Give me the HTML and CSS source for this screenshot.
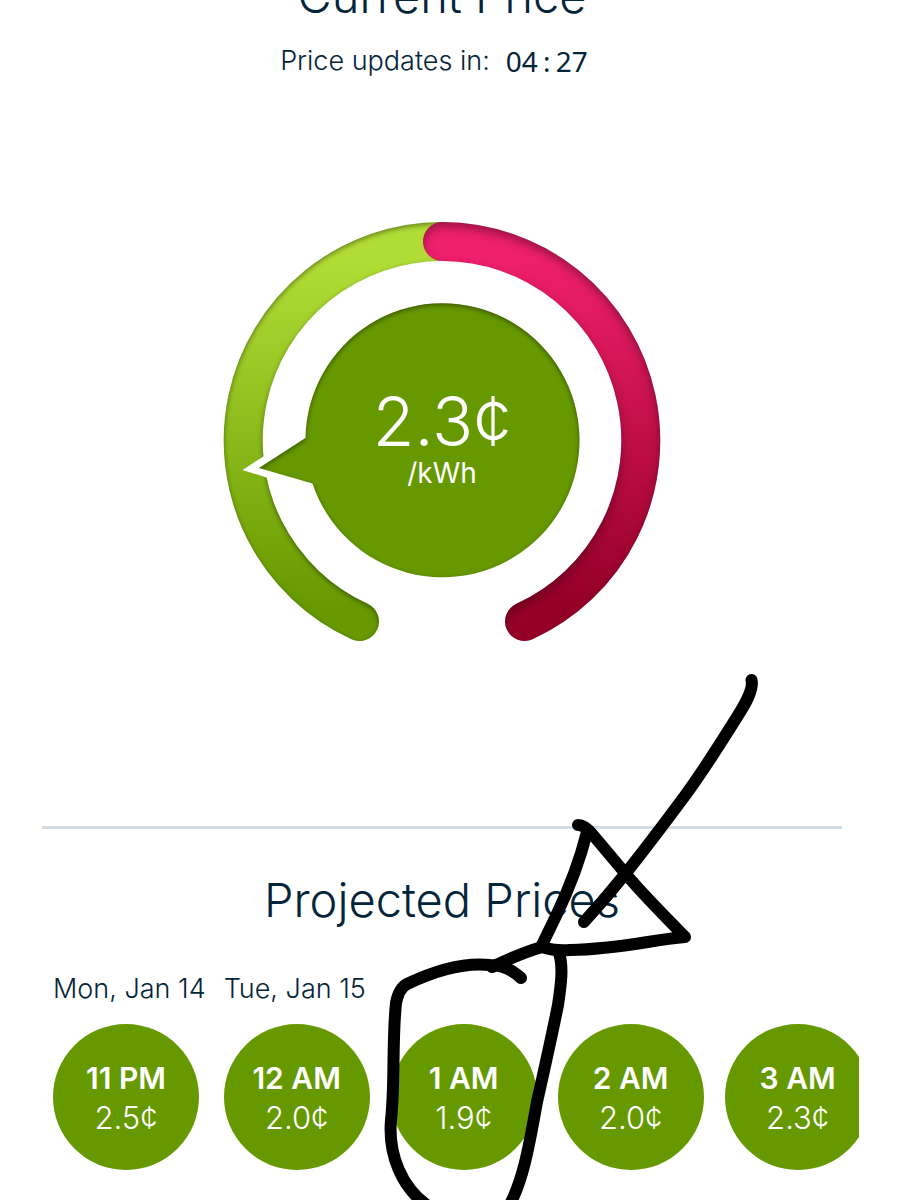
FILE: index.html
```html
<!DOCTYPE html>
<html lang="en">
<head>
<meta charset="utf-8">
<meta name="viewport" content="width=device-width, initial-scale=1">
<title>Current Price</title>
<link rel="stylesheet" href="styles.css">
</head>
<body>
<main class="page">
  <section class="current">
    <h1 class="title">Current Price</h1>
    <p class="updates">Price updates in: <time class="timer">04<span class="colon">:</span>27</time></p>
    <div class="gauge">
      <svg class="gauge-art" viewBox="0 0 440 440" aria-hidden="true">
        <defs>
          <linearGradient id="low" gradientUnits="userSpaceOnUse" x1="0" y1="0" x2="0" y2="420">
            <stop offset="0.1" stop-color="#b0dc35"/>
            <stop offset="0.92" stop-color="#669900"/>
          </linearGradient>
          <linearGradient id="high" gradientUnits="userSpaceOnUse" x1="0" y1="0" x2="0" y2="420">
            <stop offset="0.1" stop-color="#ee1f6b"/>
            <stop offset="0.9" stop-color="#960028"/>
          </linearGradient>
          <filter id="inset" filterUnits="userSpaceOnUse" x="-20" y="-20" width="480" height="480" color-interpolation-filters="sRGB">
            <feOffset in="SourceAlpha" dy="2" result="o"/>
            <feGaussianBlur in="o" stdDeviation="2.500" result="b"/>
            <feComposite in="SourceAlpha" in2="b" operator="out" result="edge"/>
            <feFlood flood-color="#000" flood-opacity="0.42"/>
            <feComposite in2="edge" operator="in" result="shade"/>
            <feMerge><feMergeNode in="SourceGraphic"/><feMergeNode in="shade"/></feMerge>
          </filter>
          <filter id="inset-deep" filterUnits="userSpaceOnUse" x="-20" y="-20" width="480" height="480" color-interpolation-filters="sRGB">
            <feOffset in="SourceAlpha" dy="5" result="o"/>
            <feGaussianBlur in="o" stdDeviation="5" result="b"/>
            <feComposite in="SourceAlpha" in2="b" operator="out" result="edge"/>
            <feFlood flood-color="#200010" flood-opacity="0.4"/>
            <feComposite in2="edge" operator="in" result="shade"/>
            <feMerge><feMergeNode in="SourceGraphic"/><feMergeNode in="shade"/></feMerge>
          </filter>
        </defs>
        <path d="M137.500 400.500A199 199 0 0 1 220 20.500" fill="none" stroke="url(#low)" stroke-width="39" stroke-linecap="round" filter="url(#inset)"/>
        <path d="M220.500 20.500A199 199 0 0 1 302.500 400.500" fill="none" stroke="url(#high)" stroke-width="39" stroke-linecap="round" filter="url(#inset-deep)"/>
        <path d="M20.500 249L84 208V269Z" fill="#fff"/>
        <path d="M37 247L83.500 217A137 137 0 1 1 90.500 262.500Z" fill="#669900" filter="url(#inset)"/>
      </svg>
      <div class="reading">
        <span class="amount">2.3¢</span>
        <span class="unit">/kWh</span>
      </div>
    </div>
  </section>
  <hr class="rule">
  <section class="projected">
    <h2 class="title">Projected Prices</h2>
    <div class="rail">
      <section class="day">
        <h3 class="date">Mon, Jan 14</h3>
        <ul class="hours">
          <li class="hour"><b class="hour-name">11 PM</b><span class="hour-price">2.5¢</span></li>
        </ul>
      </section>
      <section class="day">
        <h3 class="date">Tue, Jan 15</h3>
        <ul class="hours">
          <li class="hour"><b class="hour-name">12 AM</b><span class="hour-price">2.0¢</span></li>
          <li class="hour"><b class="hour-name">1 AM</b><span class="hour-price">1.9¢</span></li>
          <li class="hour"><b class="hour-name">2 AM</b><span class="hour-price">2.0¢</span></li>
          <li class="hour"><b class="hour-name">3 AM</b><span class="hour-price">2.3¢</span></li>
        </ul>
      </section>
    </div>
  </section>
  <svg class="scribble" width="400" height="560" viewBox="370 660 400 560" aria-hidden="true">
    <g fill="none" stroke="#000" stroke-width="12" stroke-linecap="round" stroke-linejoin="round">
      <path d="M751.500 680C754 690 744 706 737 717C720 744 704 770 684 797C664 824 645 849 626 873Q605 899 584 922"/>
      <path d="M578 825Q585 825 593 835L625 873C645 897 665 916 685 937C650 940 620 949 570 950Q554 951 542 947Q521 953 492 967"/>
      <path d="M587 832C580 860 567 893 556 916L541 947"/>
      <path d="M521 978Q507 965 490 965C462 962 432 972 407 984Q399 988 396 1003C392 1040 395 1085 391 1120C388 1155 402 1188 428 1206"/>
      <path d="M558 950C564 965 561 985 558 1005C551 1040 543 1075 537 1102C530 1140 524 1180 508 1208"/>
    </g>
  </svg>
</main>
</body>
</html>
```
FILE: styles.css
```css
* { box-sizing: border-box; }

body {
  margin: 0;
  background: #fff;
  color: #04243a;
  font-family: Inter, "Liberation Sans", sans-serif;
  font-weight: 300;
}

.page {
  position: relative;
  min-height: 100vh;
  max-height: 100vh;
  overflow: hidden;
  padding: 0 60px 0 42px;
}

.title {
  margin: 0;
  font-size: 47px;
  line-height: 56px;
  font-weight: 300;
  text-align: center;
}

.current .title { margin-top: -32px; }

.updates {
  display: flex;
  justify-content: center;
  gap: 16px;
  margin: 21px 16px 0 0;
  font-size: 27px;
  line-height: 32px;
}

.timer {
  font-family: "Noto Sans", sans-serif;
  font-size: 28px;
  font-weight: 400;
  line-height: 32px;
}

.colon {
  display: inline-block;
  width: 18px;
  text-align: center;
}

.gauge {
  display: grid;
  justify-items: center;
  margin-top: 144px;
}

.gauge-art,
.reading { grid-area: 1 / 1; }

.gauge-art {
  width: 440px;
  max-width: 100%;
  overflow: visible;
}

.reading {
  display: flex;
  flex-direction: column;
  align-items: center;
  align-self: center;
  padding-bottom: 8px;
  color: #fff;
}

.amount {
  font-size: 68px;
  line-height: 72px;
}

.unit {
  font-size: 28px;
  line-height: 32px;
  font-weight: 400;
}

.rule {
  height: 3px;
  margin: 165px 0 0;
  border: 0;
  background: #d3dce5;
}

.projected .title { margin-top: 43px; }

.rail {
  display: flex;
  gap: 18px;
  margin: 45px -17px 0 0;
  padding-left: 11px;
  overflow: hidden;
}

.day { flex: none; }

.date {
  margin: 0;
  font-size: 27px;
  line-height: 32px;
  font-weight: 300;
}

.hours {
  display: flex;
  gap: 21px;
  margin: 19px 0 0;
  padding: 0;
  list-style: none;
}

.hour {
  display: flex;
  flex: none;
  flex-direction: column;
  align-items: center;
  justify-content: center;
  width: 146px;
  height: 146px;
  padding-top: 2px;
  border-radius: 50%;
  background: #669900;
  color: #fff;
}

.hour-name {
  font-size: 30px;
  line-height: 40px;
  font-weight: 600;
}

.hour-price {
  font-size: 31px;
  line-height: 40px;
}

.scribble {
  position: absolute;
  left: 370px;
  top: 660px;
}
```
